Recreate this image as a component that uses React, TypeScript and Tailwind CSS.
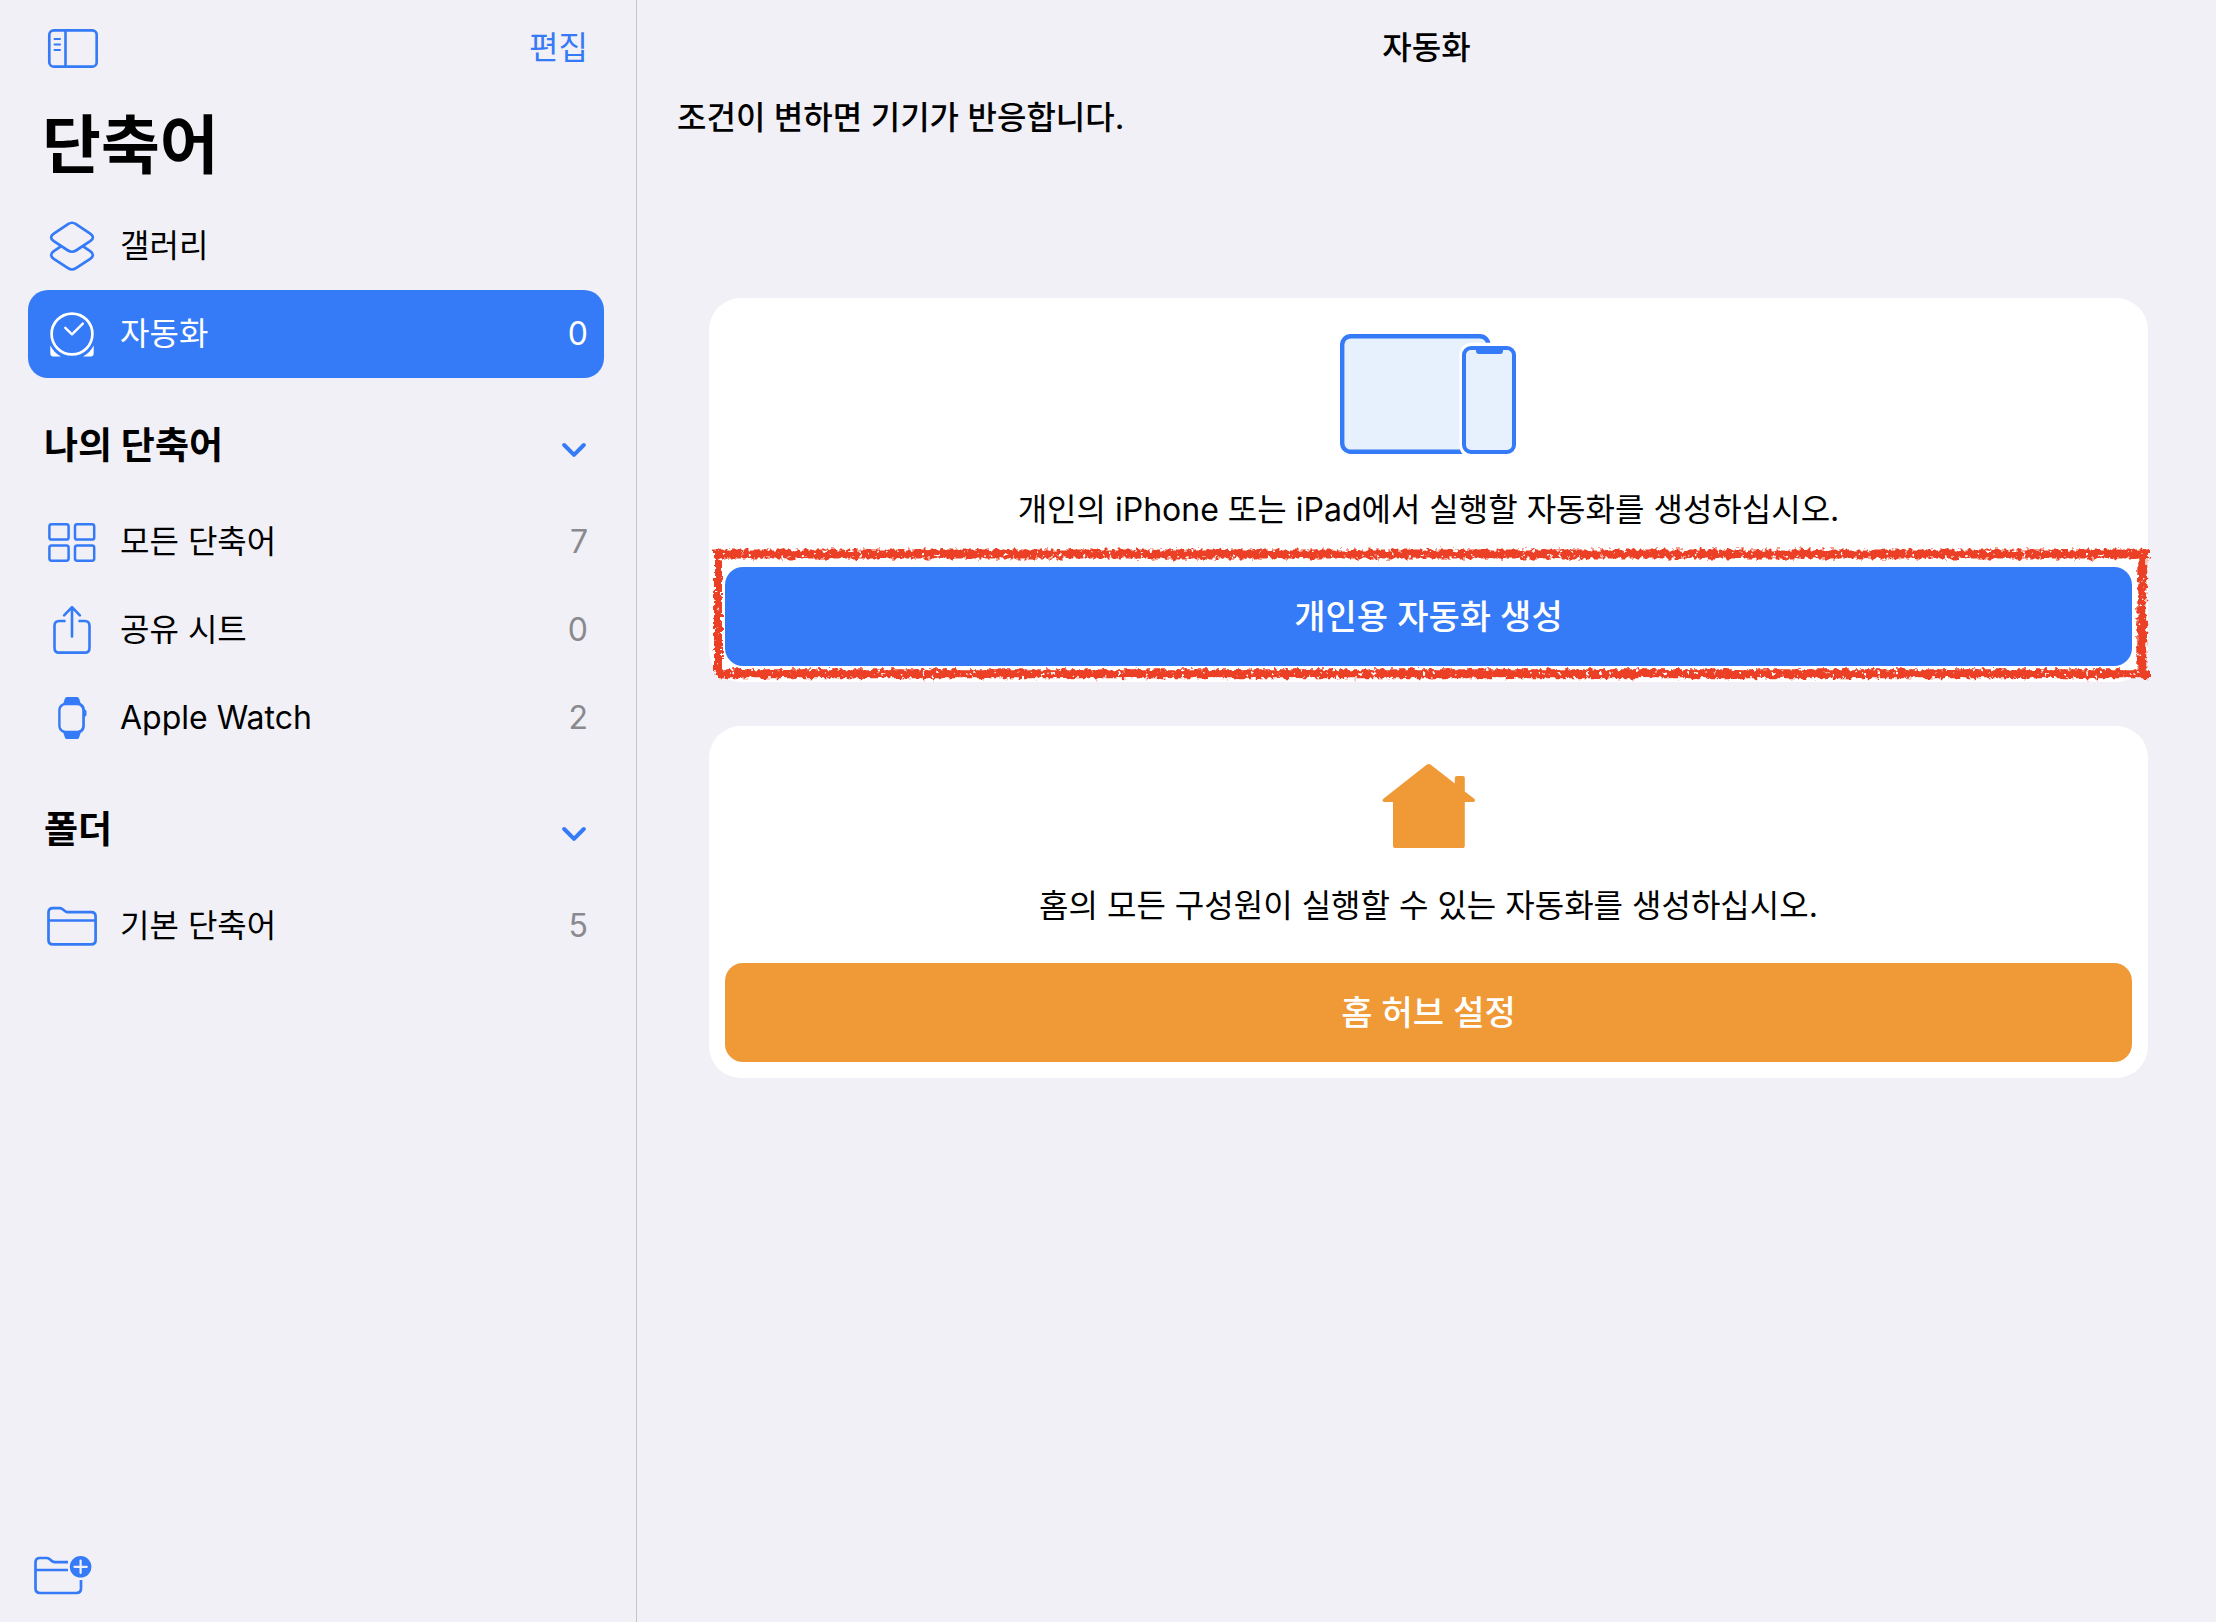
import React from "react";

type IconProps = { className?: string };

const SidebarIcon = () => (
  <svg width="52" height="42" viewBox="0 0 52 42" fill="none" stroke="currentColor">
    <rect x="3.3" y="3.3" width="47.4" height="36.4" rx="4.5" strokeWidth="2.7" />
    <path d="M19.5 3v37" strokeWidth="2.6" />
    <path d="M8.5 12h5.5M8.5 17.5h5.5M8.5 23h5.5" strokeWidth="2" strokeLinecap="round" />
  </svg>
);

const GalleryIcon = () => (
  <svg width="52" height="52" viewBox="0 0 52 52" fill="none" stroke="currentColor" strokeWidth="2.7" strokeLinejoin="round">
    <path d="M22 4.1Q26 1.4 30 4.1L44.2 13.6Q49.6 17.4 44.2 21.2L30 30.5Q26 33 22 30.5L7.8 21.2Q2.4 17.4 7.8 13.6Z" />
    <path d="M15.3 26.2L7.8 31.2Q2.4 35 7.8 38.8L22 48.2Q26 50.8 30 48.2L44.2 38.8Q49.6 35 44.2 31.2L36.7 26.2" />
  </svg>
);

const ClockIcon = () => (
  <svg width="52" height="52" viewBox="0 0 52 52" fill="none">
    <circle cx="26" cy="26" r="20.4" stroke="currentColor" strokeWidth="2.7" />
    <path
      d="M19.3 19.8L26 26.3L36.8 15.6"
      stroke="currentColor"
      strokeWidth="2.4"
      strokeLinecap="round"
      strokeLinejoin="round"
    />
    <path d="M4.3 37.4C6.6 42 10 45.6 14.9 48.4H7.3Q4.3 48.4 4.3 45.4Z" fill="currentColor" />
    <path d="M47.7 37.4C45.4 42 42 45.6 37.1 48.4H44.7Q47.7 48.4 47.7 45.4Z" fill="currentColor" />
  </svg>
);

const GridIcon = () => (
  <svg width="52" height="52" viewBox="0 0 52 52" fill="none" stroke="currentColor" strokeWidth="2.5">
    <rect x="3.4" y="8.2" width="19.2" height="15.4" rx="2.2" />
    <rect x="29" y="8.2" width="19.2" height="15.4" rx="2.2" />
    <rect x="3.4" y="29.4" width="19.2" height="15.4" rx="2.2" />
    <rect x="29" y="29.4" width="19.2" height="15.4" rx="2.2" />
  </svg>
);

const ShareIcon = () => (
  <svg
    width="52"
    height="52"
    viewBox="0 0 52 52"
    fill="none"
    stroke="currentColor"
    strokeWidth="2.6"
    strokeLinejoin="round"
  >
    <path d="M19.6 17H13.2Q8.5 17 8.5 21.7V43.9Q8.5 48.6 13.2 48.6H38.8Q43.5 48.6 43.5 43.9V21.7Q43.5 17 38.8 17H32.4" />
    <path d="M26 32.4V3.4M18.1 11.3L26 3.2L33.9 11.3" strokeLinecap="round" />
  </svg>
);

const WatchIcon = () => (
  <svg width="52" height="52" viewBox="0 0 52 52" fill="none">
    <path
      d="M21 5H31Q32.6 5 33.1 6.6L34.6 11Q38.6 13 38.9 17.4Q40.5 17.8 40.5 19.6V22.6Q40.5 24.4 38.9 24.8V33.6Q38.9 39 34.6 41L33.1 45.4Q32.6 47 31 47H21Q19.4 47 18.9 45.4L17.4 41Q12.2 39 12.2 33.6V18.4Q12.2 13 17.4 11L18.9 6.6Q19.4 5 21 5Z"
      fill="currentColor"
    />
    <rect x="14.6" y="13.3" width="21.6" height="25.4" rx="5" className="fill-[#f1f0f6]" />
  </svg>
);

const FolderIcon = () => (
  <svg width="52" height="52" viewBox="0 0 52 52" fill="none" stroke="currentColor" strokeWidth="2.7" strokeLinejoin="round">
    <path d="M2.5 12.6Q2.5 8.2 6.9 8.2H13.4Q15.2 8.2 16.6 9.3L19.2 11.3Q20.4 12.2 22 12.2H45.2Q49.6 12.2 49.6 16.6V40Q49.6 44.4 45.2 44.4H6.9Q2.5 44.4 2.5 40Z" />
    <path d="M2.5 20.5H49.6" />
  </svg>
);

const NewFolderIcon = () => (
  <svg width="58" height="42" viewBox="0 0 58 42" fill="none">
    <g stroke="currentColor" strokeWidth="2.7" strokeLinejoin="round">
      <path d="M34 8.2H21.2Q19.4 8.2 18 7.1L15.4 5Q14.2 4 12.6 4H5.9Q1.5 4 1.5 8.4V34.6Q1.5 39 5.9 39H42.6Q47 39 47 34.6V26" />
      <path d="M1.5 16H34" />
    </g>
    <circle cx="46.6" cy="12.8" r="10.8" fill="currentColor" />
    <path d="M40.4 12.8H52.8M46.6 6.6V19" className="stroke-[#f1f0f6]" strokeWidth="2.2" strokeLinecap="round" />
  </svg>
);

const Chevron = () => (
  <svg width="24" height="16" viewBox="0 0 24 16" fill="none" stroke="currentColor" strokeWidth="4">
    <path d="M2.2 3L12 12.8L21.8 3" strokeLinecap="round" strokeLinejoin="round" />
  </svg>
);

const DevicesIcon = () => (
  <svg width="178" height="120" viewBox="0 0 178 120">
    <rect x="2.2" y="2.2" width="146.2" height="115.6" rx="8.5" className="fill-[#e7f1fe] stroke-[#357af6]" strokeWidth="4.4" />
    <rect x="119.4" y="8.8" width="60" height="115" rx="12" className="fill-white" />
    <rect x="124" y="14" width="50" height="104" rx="7" className="fill-[#e7f1fe] stroke-[#357af6]" strokeWidth="4" />
    <path d="M136 13H163V17Q163 20 160 20H139Q136 20 136 17Z" className="fill-[#357af6]" />
  </svg>
);

const HouseIcon = () => (
  <svg width="94" height="88" viewBox="0 0 94 88" className="fill-[#f09a37]">
    <path d="M44.6 2.8Q46.7 1.2 48.8 2.8L72.8 21.4V16Q72.8 14 74.8 14H80.8Q82.8 14 82.8 16V29.6L92.2 36.8Q93.8 38.2 92.6 39.6Q92.2 40 91.2 40H82.8V83.4Q82.8 86 80.2 86H13.6Q11 86 11 83.4V40H2.4Q1.2 40 0.7 39.2Q0 38 1.4 36.8Z" />
  </svg>
);

// crayon-like marker frame drawn around the button
const MarkerFrame = ({ className }: IconProps) => (
  <svg className={className} width="100%" height="100%" aria-hidden="true">
    <defs>
      <filter id="crayon" filterUnits="userSpaceOnUse" x="-10" y="-10" width="110%" height="120%">
        <feTurbulence type="fractalNoise" baseFrequency="0.22" numOctaves="2" seed="4" result="noise" />
        <feDisplacementMap in="SourceGraphic" in2="noise" scale="8" xChannelSelector="R" yChannelSelector="G" result="rough" />
        <feTurbulence type="fractalNoise" baseFrequency="0.22" numOctaves="2" seed="11" result="grain" />
        <feColorMatrix in="grain" type="matrix" values="0 0 0 0 0  0 0 0 0 0  0 0 0 0 0  0 0 0 -12 9.1" result="holes" />
        <feComposite in="rough" in2="holes" operator="in" />
      </filter>
    </defs>
    <g filter="url(#crayon)" className="stroke-[#eb4025]">
      <line x1="1" y1="5" x2="100%" y2="5" strokeWidth="9" />
      <line x1="5" y1="94.6%" x2="100%" y2="94.6%" strokeWidth="9" />
      <line x1="5" y1="1" x2="5" y2="95%" strokeWidth="8" />
      <line x1="99.5%" y1="2" x2="99.5%" y2="97%" strokeWidth="9" />
    </g>
  </svg>
);

type RowProps = {
  icon: React.ReactNode;
  label: string;
  count?: number;
  active?: boolean;
};

const Row = ({ icon, label, count, active }: RowProps) => (
  <li>
    <a
      href="#"
      className={
        active
          ? "flex h-[88px] items-center rounded-[20px] bg-[#357af6] pl-[18px] pr-4 text-white"
          : "flex h-[88px] items-center rounded-[20px] pl-[18px] pr-4"
      }
    >
      <span className={active ? "text-white" : "text-[#357af6]"}>{icon}</span>
      <span className="ml-[22px] flex-1">{label}</span>
      {count !== undefined && (
        <span className={active ? "text-white" : "text-[#8a8a8e]"}>{count}</span>
      )}
    </a>
  </li>
);

const SectionTitle = ({ children }: { children: React.ReactNode }) => (
  <h2 className="mb-1 mt-5">
    <button className="flex h-24 w-full items-center justify-between pl-4 pr-[18px] text-[37px] font-bold">
      {children}
      <span className="pt-2 text-[#357af6]">
        <Chevron />
      </span>
    </button>
  </h2>
);

const Sidebar = () => (
  <aside className="flex w-[637px] shrink-0 flex-col border-r border-[#c6c6c9] pl-7 pr-8">
    <div className="flex h-24 items-center justify-between pl-[18px] pr-4 text-[#357af6]">
      <button aria-label="사이드바">
        <SidebarIcon />
      </button>
      <button>편집</button>
    </div>
    <h1 className="pl-3.5 text-[64px] font-bold leading-[98px]">단축어</h1>
    <nav className="mt-2">
      <ul>
        <Row icon={<GalleryIcon />} label="갤러리" />
        <Row icon={<ClockIcon />} label="자동화" count={0} active />
      </ul>
      <SectionTitle>나의 단축어</SectionTitle>
      <ul>
        <Row icon={<GridIcon />} label="모든 단축어" count={7} />
        <Row icon={<ShareIcon />} label="공유 시트" count={0} />
        <Row icon={<WatchIcon />} label="Apple Watch" count={2} />
      </ul>
      <SectionTitle>폴더</SectionTitle>
      <ul>
        <Row icon={<FolderIcon />} label="기본 단축어" count={5} />
      </ul>
    </nav>
    <div className="mt-auto pb-[26px] pl-1.5">
      <button className="block text-[#357af6]" aria-label="새로운 폴더">
        <NewFolderIcon />
      </button>
    </div>
  </aside>
);

type CardProps = {
  icon: React.ReactNode;
  text: string;
  children: React.ReactNode;
};

const Card = ({ icon, text, children }: CardProps) => (
  <section className="flex flex-col items-center rounded-[32px] bg-white px-4 pb-4 pt-9">
    {icon}
    <p className="mb-[33px] mt-8 leading-[48px]">{text}</p>
    <div className="relative w-full">{children}</div>
  </section>
);

const App = () => {
  return (
    <div className="flex min-h-screen bg-[#f1f0f6] font-[Inter,'Noto_Sans_CJK_KR',sans-serif] text-[32px] text-black">
      <Sidebar />
      <main className="min-w-0 flex-1">
        <header className="flex h-24 items-center justify-center">
          <h1 className="font-medium">자동화</h1>
        </header>
        <p className="pl-10 font-medium leading-[44px]">조건이 변하면 기기가 반응합니다.</p>
        <div className="mt-[158px] flex flex-col gap-11 pl-[72px] pr-[68px]">
          <Card icon={<DevicesIcon />} text="개인의 iPhone 또는 iPad에서 실행할 자동화를 생성하십시오.">
            <button className="h-[99px] w-full rounded-[18px] bg-[#357af6] text-[34px] font-medium text-white">
              개인용 자동화 생성
            </button>
            <MarkerFrame className="pointer-events-none absolute -left-3 -top-[18px] h-[132px] w-[calc(100%+29px)] overflow-visible" />
          </Card>
          <Card icon={<HouseIcon />} text="홈의 모든 구성원이 실행할 수 있는 자동화를 생성하십시오.">
            <button className="h-[99px] w-full rounded-[18px] bg-[#f09a37] text-[34px] font-medium text-white">
              홈 허브 설정
            </button>
          </Card>
        </div>
      </main>
    </div>
  );
};

export default App;
